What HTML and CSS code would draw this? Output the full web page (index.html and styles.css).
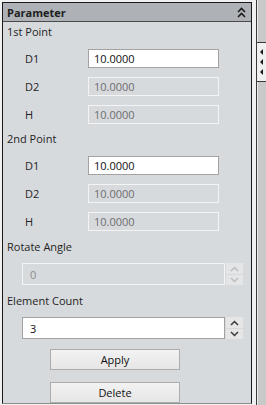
FILE: index.html
```html
<!DOCTYPE html>
<html lang="en">
<head>
    <meta charset="UTF-8">
    <meta name="viewport" content="width=device-width, initial-scale=1.0">
    <title>Parameter</title>
    <link rel="stylesheet" href="styles.css">
</head>
<body>
    <div class="app">
        <section class="panel">
            <header class="panel-header">
                <span>Parameter</span>
                <svg class="collapse" width="9" height="11" viewBox="0 0 9 11">
                    <path d="M1 5 L4.5 1.5 L8 5 M1 10 L4.5 6.5 L8 10" fill="none" stroke="#1c1c1c" stroke-width="1.6"/>
                </svg>
            </header>

            <div class="panel-body">
                <div class="group">
                    <div class="group-title">1st Point</div>
                    <div class="field">
                        <label>D1</label>
                        <input class="box" type="text" value="10.0000">
                    </div>
                    <div class="field">
                        <label>D2</label>
                        <input class="box" type="text" value="10.0000" disabled>
                    </div>
                    <div class="field">
                        <label>H</label>
                        <input class="box" type="text" value="10.0000" disabled>
                    </div>
                </div>

                <div class="group group-second">
                    <div class="group-title">2nd Point</div>
                    <div class="field">
                        <label>D1</label>
                        <input class="box" type="text" value="10.0000">
                    </div>
                    <div class="field">
                        <label>D2</label>
                        <input class="box" type="text" value="10.0000" disabled>
                    </div>
                    <div class="field">
                        <label>H</label>
                        <input class="box" type="text" value="10.0000" disabled>
                    </div>
                </div>

                <div class="group-title title-spin">Rotate Angle</div>
                <div class="spin disabled">
                    <input class="spin-input" type="text" value="0" disabled>
                    <div class="spin-buttons">
                        <span class="spin-btn">
                            <svg width="9" height="6" viewBox="0 0 9 6"><path d="M1 5 L4.5 1.5 L8 5" fill="none" stroke="currentColor" stroke-width="1.5"/></svg>
                        </span>
                        <span class="spin-btn">
                            <svg width="9" height="6" viewBox="0 0 9 6"><path d="M1 1 L4.5 4.5 L8 1" fill="none" stroke="currentColor" stroke-width="1.5"/></svg>
                        </span>
                    </div>
                </div>

                <div class="group-title title-spin">Element Count</div>
                <div class="spin">
                    <input class="spin-input" type="text" value="3">
                    <div class="spin-buttons">
                        <span class="spin-btn">
                            <svg width="9" height="6" viewBox="0 0 9 6"><path d="M1 5 L4.5 1.5 L8 5" fill="none" stroke="currentColor" stroke-width="1.5"/></svg>
                        </span>
                        <span class="spin-btn">
                            <svg width="9" height="6" viewBox="0 0 9 6"><path d="M1 1 L4.5 4.5 L8 1" fill="none" stroke="currentColor" stroke-width="1.5"/></svg>
                        </span>
                    </div>
                </div>

                <button class="btn btn-apply">Apply</button>
                <button class="btn btn-delete">Delete</button>
            </div>
        </section>

        <aside class="dock">
            <div class="dock-top"></div>
            <div class="dock-tab">
                <i class="arrow"></i>
                <i class="arrow"></i>
                <i class="arrow"></i>
            </div>
            <div class="dock-rest"></div>
        </aside>
    </div>
</body>
</html>
```

FILE: styles.css
```css
body {
    margin: 0;
    width: 266px;
    height: 405px;
    overflow: hidden;
    background: #f0f0f0;
    font-family: 'Open Sans', sans-serif;
    font-size: 11px;
    color: #1e1e1e;
}

.app {
    display: flex;
    height: 405px;
}

/* main property panel */
.panel {
    margin: 2px 0 0 2px;
    width: 248px;
    height: 400px;
    border: 1px solid #1a1a1a;
    border-bottom-color: #8e8e8e;
    background: #d7dadd;
    display: flex;
    flex-direction: column;
}
.panel-header {
    height: 18px;
    background: #aeb1b5;
    border-bottom: 1px solid #4a4a4a;
    display: flex;
    align-items: center;
    justify-content: space-between;
    padding: 0 5px 0 4px;
    font-weight: 700;
    font-size: 11px;
}
.collapse {
    margin-top: 1px;
}

.panel-body {
    display: flex;
    flex-direction: column;
}

.group {
    display: flex;
    flex-direction: column;
}
.group-second {
    margin-top: 5px;
}
.group-title {
    height: 20px;
    line-height: 20px;
    padding-left: 4px;
}
.field {
    display: flex;
    align-items: center;
    height: 19px;
    margin-top: 9px;
}
.group-title + .field {
    margin-top: 7px;
}
.field label {
    display: block;
    flex: 0 0 85px;
    padding-left: 22px;
    box-sizing: border-box;
}

.box {
    width: 131px;
    height: 19px;
    box-sizing: border-box;
    margin: 0;
    padding: 0 5px;
    border: 1px solid #a3a3a3;
    background: #fff;
    font-family: 'Open Sans', sans-serif;
    font-size: 11px;
    color: #111;
    outline: none;
}
.box:disabled {
    background: #d7dadd;
    border-color: #f4f4f4;
    color: #6d6d6d;
}

/* spin boxes */
.title-spin {
    margin-top: 6px;
}
.spin {
    display: flex;
    margin: 6px 0 0 19px;
    height: 22px;
}
.spin-input {
    width: 203px;
    height: 22px;
    box-sizing: border-box;
    margin: 0;
    padding: 0 7px;
    border: 1px solid #a3a3a3;
    background: #fff;
    font-family: 'Open Sans', sans-serif;
    font-size: 11px;
    color: #111;
    outline: none;
}
.spin-input:disabled {
    background: #d7dadd;
    border-color: #f4f4f4;
    color: #8a8a8a;
}
.spin-buttons {
    display: flex;
    flex-direction: column;
    gap: 1px;
    margin-left: 1px;
}
.spin-btn {
    width: 17px;
    height: 10px;
    background: #e6e6e6;
    color: #3a3a3a;
    display: flex;
    align-items: center;
    justify-content: center;
}
.spin-btn:first-child {
    height: 11px;
}
.disabled .spin-btn {
    background: #e4e5e7;
    color: #bdbdbd;
}

/* buttons */
.btn {
    width: 130px;
    height: 21px;
    margin: 0 0 0 47px;
    padding: 0;
    border: 1px solid #adadad;
    background: linear-gradient(#f2f2f2, #e6e6e6);
    font-family: 'Open Sans', sans-serif;
    font-size: 11px;
    color: #111;
}
.btn-apply {
    margin-top: 10px;
}
.btn-delete {
    margin-top: 12px;
}

/* collapsed dock strip on the right */
.dock {
    margin-left: 4px;
    width: 10px;
    display: flex;
    flex-direction: column;
}
.dock-top {
    height: 42px;
    border-left: 1px solid #3a3a3a;
    background: #c9c9c9;
    box-shadow: inset 1px 0 0 #ececec;
}
.dock-tab {
    height: 38px;
    border: 1px solid #3a3a3a;
    border-right: none;
    background: #f0f0f0;
    display: flex;
    flex-direction: column;
    align-items: center;
    justify-content: center;
    gap: 4px;
}
.arrow {
    display: block;
    width: 0;
    height: 0;
    border-top: 3px solid transparent;
    border-bottom: 3px solid transparent;
    border-right: 3px solid #1a1a1a;
}
.dock-rest {
    flex: 1;
    border-left: 1px solid #3a3a3a;
    background: #c9c9c9;
    box-shadow: inset 1px 0 0 #ececec;
}
```
